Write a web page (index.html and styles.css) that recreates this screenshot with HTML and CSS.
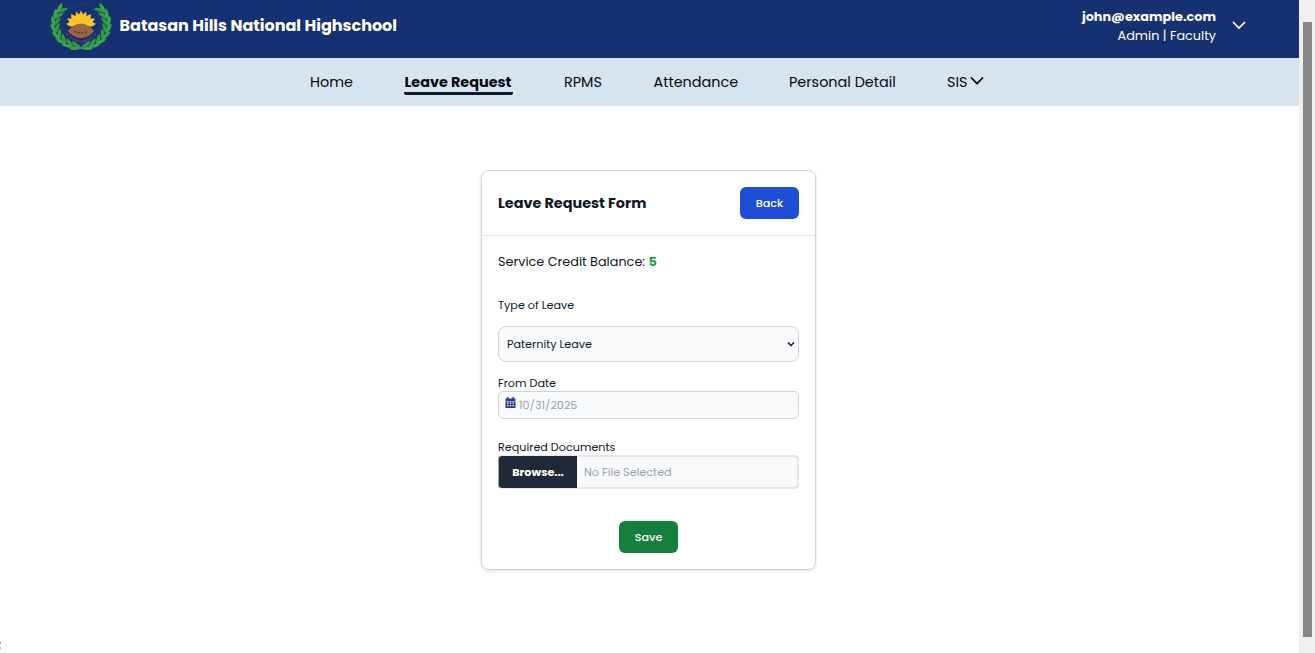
FILE: index.html
```html
<!DOCTYPE html>
<html lang="en">
<head>
<meta charset="utf-8">
<title>Leave Request</title>
<link rel="stylesheet" href="styles.css">
</head>
<body>
<div class="page">
  <header class="header">
    <svg class="logo" viewBox="0 0 62 50" aria-hidden="true">
      <defs>
        <g id="leaf"><path d="M35 48Q30 42.500 25.500 42Q26 48 35 48Z" fill="#2f9a40"/><path d="M35 48Q29 52 24 50Q28 45.500 35 48Z" fill="#3da648"/></g>
        <g id="branch">
          <use href="#leaf" transform="rotate(8 31 24)"/><use href="#leaf" transform="rotate(25 31 24)"/><use href="#leaf" transform="rotate(42 31 24)"/><use href="#leaf" transform="rotate(59 31 24)"/><use href="#leaf" transform="rotate(76 31 24)"/><use href="#leaf" transform="rotate(93 31 24)"/><use href="#leaf" transform="rotate(110 31 24)"/><use href="#leaf" transform="rotate(127 31 24)"/>
          <path d="M35 49Q29 47 24 45" fill="none" stroke="#329447"/>
        </g>
      </defs>
      <use href="#branch" transform="matrix(1.13 0 0 1 -4.030 0)"/>
      <use href="#branch" transform="matrix(-1.13 0 0 1 66.030 0)"/>
      <circle cx="31" cy="23" r="18.500" fill="none" stroke="#29396e" stroke-width="3" stroke-dasharray="1 1.500"/>
      <path d="M31 10.500L33 14.500L36 11.500L36.500 16L41 14L40.500 18.500L45 18.500L42.500 22L46 24L42 26.500H20L16 24L19.500 22L17 18.500L21.500 18.500L21 14L25.500 16L26 11.500L29 14.500Z" fill="#fbc52a"/>
      <path d="M18 31Q24 23.500 31 23.500Q38 23.500 44 31Q39 37.500 31 38Q23 37.500 18 31Z" fill="#9a6540"/>
      <path d="M24 31.500Q31 34 38 31.500" fill="none" stroke="#513c45" stroke-width="1.600" stroke-dasharray="2 1.600"/>
      <path d="M20 37Q31 46 42 37" fill="none" stroke="#71345a" stroke-width="1.800" stroke-dasharray="1.500 .8"/>
      <circle cx="17" cy="34.500" r=".8" fill="#c83c4c"/><circle cx="45" cy="34.500" r=".8" fill="#c83c4c"/>
    </svg>
    <span class="school">Batasan Hills National Highschool</span>
    <div class="account">
      <span class="email">john@example.com</span>
      <span class="role">Admin | Faculty</span>
    </div>
    <svg class="chevron" viewBox="0 0 14 14"><path d="M1.500 4.500L7 10.200L12.500 4.500"/></svg>
  </header>
  <nav class="nav">
    <a class="home">Home</a>
    <a class="active">Leave Request</a>
    <a class="rpms">RPMS</a>
    <a class="attendance">Attendance</a>
    <a class="personal">Personal Detail</a>
    <a class="sis">SIS<svg class="nav-chevron" viewBox="0 0 14 14"><path d="M1.500 4L7 9.700L12.500 4"/></svg></a>
  </nav>
  <main class="main">
    <section class="card">
      <div class="card-head"><h1 class="title">Leave Request Form</h1><button class="btn back">Back</button></div>
      <form class="form">
        <p class="balance">Service Credit Balance: <b class="credit">5</b></p>
        <label class="label type">Type of Leave</label>
        <div class="select"><span class="value">Paternity Leave</span><svg class="arrow" viewBox="0 0 8 8"><path d="M1 2.500L4 5.500L7 2.500"/></svg></div>
        <label class="label from">From Date</label>
        <div class="date">
          <svg class="calendar" viewBox="0 0 11 12"><path fill="#263d8c" fill-rule="evenodd" d="M2 0h1.500v1.500h4V0H9v1.500h1.500V4H.5V1.500H2ZM.5 4.500h10v6.500H.5ZM2 5.500v1.300h1.500V5.500Zm2.800 0v1.300h1.500V5.500Zm2.700 0v1.300H9V5.500ZM2 8v1.300h1.500V8Zm2.800 0v1.300h1.500V8Zm2.700 0v1.300H9V8Z"/></svg>
          <span class="date-text">10/31/2025</span>
        </div>
        <label class="label docs">Required Documents</label>
        <div class="file"><span class="browse">Browse...</span><span class="none">No File Selected</span></div>
        <button class="btn save" type="button">Save</button>
      </form>
    </section>
  </main>
  <div class="edge"></div>
</div>
<div class="scrollbar"><div class="thumb"></div></div>
</body>
</html>
```
FILE: styles.css
```css
* { box-sizing: border-box; }
body { margin: 0; width: 1315px; height: 653px; display: flex; overflow: hidden; background: #fff; color: #111827; font-family: Poppins, Inter, sans-serif; }
.page { width: 1299px; height: 653px; position: relative; }
.header { height: 58px; padding-left: 50px; display: flex; align-items: flex-start; background: #163172; color: #fff; }
.logo { width: 62px; height: 50px; flex: none; overflow: hidden; }
.school { margin: 14px 0 0 7.5px; font-size: 16px; line-height: 24px; font-weight: 700; white-space: nowrap; }
.account { margin: 7px 0 0 auto; display: flex; flex-direction: column; align-items: flex-end; line-height: 19px; font-size: 12.8px; white-space: nowrap; }
.email { font-weight: 700; }
.chevron { width: 14px; height: 14px; margin: 18px 53px 0 16px; }
.chevron path, .nav-chevron path { fill: none; stroke: currentColor; stroke-width: 1.8; stroke-linecap: round; stroke-linejoin: round; }
.nav { height: 48px; padding: 13px 0 0 310px; display: flex; align-items: flex-start; background: #d6e4ef; font-size: 14.4px; line-height: 22px; color: #050810; white-space: nowrap; }
.nav a { flex: none; }
.home { width: 94px; }
.active { width: 109px; height: 24px; margin: 0 51px 0 0; border-bottom: 3px solid #111827; border-radius: 2px; font-weight: 700; text-indent: .5px; }
.rpms { width: 89.5px; }
.attendance { width: 135.5px; }
.personal { width: 158px; }
.sis { display: flex; }
.nav-chevron { width: 14px; height: 14px; margin: 3px 0 0 3px; }
.main { padding: 64px 0 0 481px; }
.card { width: 335px; height: 400px; border: 1px solid #d1d5db; border-radius: 8px; box-shadow: 0 1px 3px rgba(0,0,0,.14); }
.card-head { height: 65px; display: flex; align-items: center; justify-content: space-between; padding: 0 16px; border-bottom: 1px solid #e5e7eb; }
.title { margin: 0; font-size: 14.4px; line-height: 22px; font-weight: 700; white-space: nowrap; }
.btn { width: 59px; height: 32px; padding: 0; border: 0; border-radius: 6px; color: #fff; font-family: inherit; font-size: 11.2px; font-weight: 500; }
.back { background: #1d4ed8; }
.form { display: flex; flex-direction: column; padding: 16px 16px 0; white-space: nowrap; }
.balance { margin: 0; height: 20px; line-height: 20px; font-size: 12.8px; }
.credit { color: #16a34a; }
.label { font-size: 11.2px; line-height: 16px; }
.type { margin-top: 25px; align-self: flex-start; }
.select { height: 36px; margin-top: 13px; padding: 0 3px 0 8px; display: flex; align-items: center; justify-content: space-between; border: 1px solid #d1d5db; border-radius: 8px; background: #f9fafb; font-size: 11.2px; }
.arrow { width: 8px; height: 8px; fill: none; stroke: #111827; stroke-width: 1.4; }
.from { margin-top: 13px; align-self: flex-start; }
.date { height: 28px; display: flex; align-items: center; padding-left: 6px; border: 1px solid #d1d5db; border-radius: 5px; background: #f9fafb; color: #9ca3af; font-size: 11.2px; }
.calendar { width: 11px; height: 12px; margin: -4px 3px 0 0; }
.docs { margin-top: 20px; align-self: flex-start; }
.file { position: relative; height: 34px; display: flex; align-items: center; overflow: hidden; border: 1px solid #e5e7eb; border-left-color: #9ca3af; border-radius: 4px; background: #f9fafb; box-shadow: inset 0 0 0 1px #e5e7eb; color: #9ca3af; font-size: 11.2px; }
/* darker rounded corners at the right end of the field */
.file::after { content: ""; position: absolute; inset: -1px; border: 1.5px solid #9ca3af; border-radius: 4px; clip-path: polygon(calc(100% - 3px) 0, 100% 0, 100% 3px, calc(100% - 3px) 3px, calc(100% - 3px) calc(100% - 3px), 100% calc(100% - 3px), 100% 100%, calc(100% - 3px) 100%); }
.browse { width: 78px; height: 32px; display: flex; align-items: center; justify-content: center; flex: none; background: #1f2937; color: #fff; font-weight: 700; }
.none { margin-left: 7px; }
.save { align-self: center; margin-top: 32px; background: #15803d; }
.edge { position: absolute; left: 0; top: 642px; width: 1px; height: 7px; border-top: 2px solid #57a5df; border-bottom: 2px solid #8cc9f4; }
.scrollbar { width: 16px; height: 653px; padding: 22px 3px 0 4px; background: #f0f0f0; }
.thumb { height: 615px; background: #868686; }
```
